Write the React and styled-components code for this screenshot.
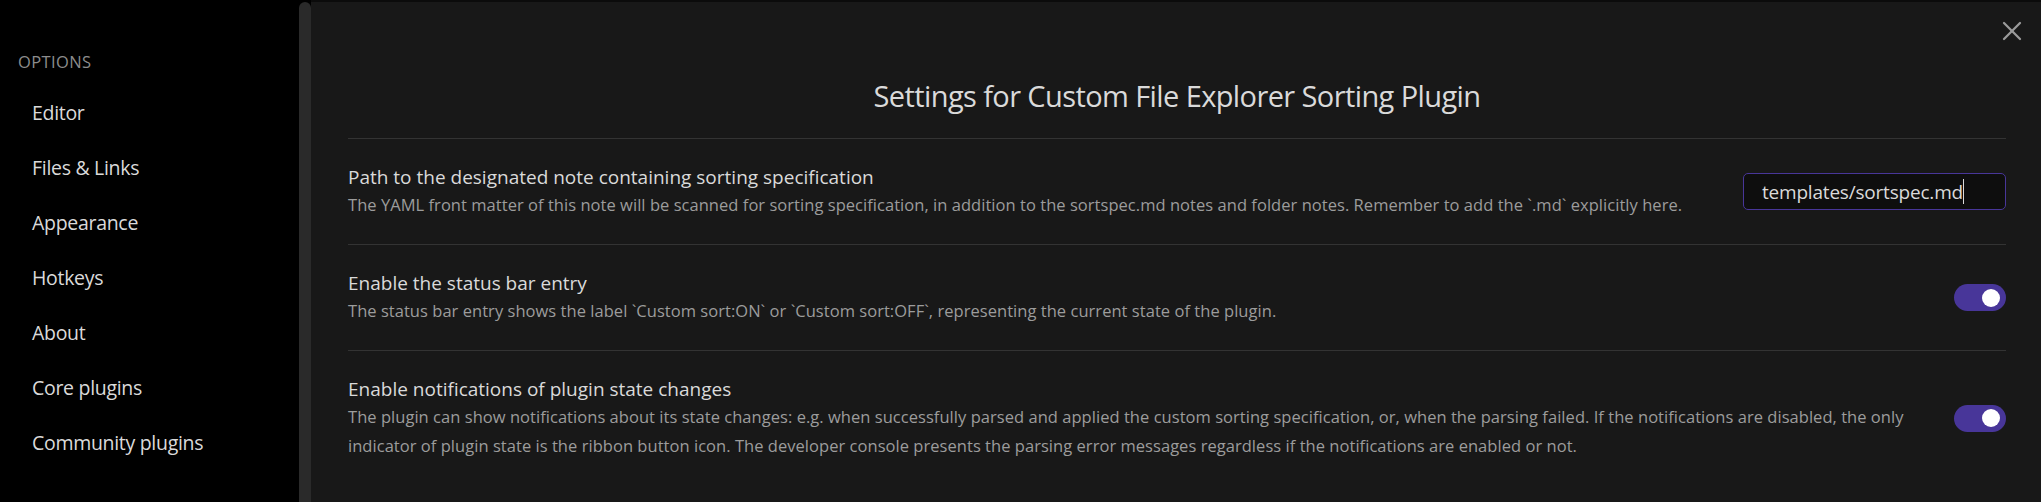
import React from 'react'
import styled, { createGlobalStyle } from 'styled-components'
import { X } from 'lucide-react'

const GlobalStyle = createGlobalStyle`
  html, body {
    margin: 0;
    padding: 0;
    background: #000;
    overflow: hidden;
  }
  * {
    box-sizing: border-box;
  }
`

const navItems = ['Editor', 'Files & Links', 'Appearance', 'Hotkeys', 'About', 'Core plugins', 'Community plugins']

const settings = [
  {
    name: 'Path to the designated note containing sorting specification',
    desc: ['The YAML front matter of this note will be scanned for sorting specification, in addition to the sortspec.md notes and folder notes. Remember to add the `.md` explicitly here.'],
    control: 'text',
    value: 'templates/sortspec.md'
  },
  {
    name: 'Enable the status bar entry',
    desc: ['The status bar entry shows the label `Custom sort:ON` or `Custom sort:OFF`, representing the current state of the plugin.'],
    control: 'toggle'
  },
  {
    name: 'Enable notifications of plugin state changes',
    desc: [
      'The plugin can show notifications about its state changes: e.g. when successfully parsed and applied the custom sorting specification, or, when the parsing failed. If the notifications are disabled, the only',
      'indicator of plugin state is the ribbon button icon. The developer console presents the parsing error messages regardless if the notifications are enabled or not.'
    ],
    control: 'toggle'
  }
]

export default function App() {
  return (
    <>
      <GlobalStyle />
      <Wrapper>
        <Sidebar>
          <NavHeader>OPTIONS</NavHeader>
          {navItems.map((item) => (
            <NavItem key={item}>{item}</NavItem>
          ))}
        </Sidebar>
        <ScrollTrack>
          <ScrollThumb />
        </ScrollTrack>
        <Main>
          <CloseButton>
            <X size={32} strokeWidth={1.7} />
          </CloseButton>
          <Title>Settings for Custom File Explorer Sorting Plugin</Title>
          {settings.map((s) => (
            <SettingRow key={s.name}>
              <Info>
                <Name>{s.name}</Name>
                <Desc>
                  {s.desc.map((line, i) => (
                    <React.Fragment key={i}>
                      {i > 0 && <br />}
                      {line}
                    </React.Fragment>
                  ))}
                </Desc>
              </Info>
              <Control>
                {s.control === 'text' ? (
                  <TextField>
                    {s.value}
                    <Caret />
                  </TextField>
                ) : (
                  <Toggle $on>
                    <Knob />
                  </Toggle>
                )}
              </Control>
            </SettingRow>
          ))}
        </Main>
      </Wrapper>
    </>
  )
}

const Wrapper = styled.div`
  display: flex;
  width: 2041px;
  height: 502px;
  overflow: hidden;
  font-family: "Open Sans", "Noto Sans", sans-serif;
  background: #000;
`

const Sidebar = styled.nav`
  width: 299px;
  flex: 0 0 299px;
  background: #000;
  padding-top: 52px;
`

const NavHeader = styled.div`
  padding-left: 18px;
  font-size: 16.5px;
  line-height: 20px;
  letter-spacing: 0.4px;
  color: #8c8c8c;
  margin-bottom: 13px;
`

const NavItem = styled.div`
  padding-left: 32px;
  font-size: 19.5px;
  line-height: 55px;
  letter-spacing: -0.3px;
  color: #dadada;
`

const ScrollTrack = styled.div`
  flex: 0 0 12px;
  background: #000;
  padding-top: 2px;
  display: flex;
`

const ScrollThumb = styled.div`
  flex: 1;
  background: #2a2a2a;
  border-radius: 6px 6px 0 0;
`

const Main = styled.main`
  position: relative;
  flex: 1;
  background: #181818;
  border-top: 2px solid #0b0b0b;
  padding: 0 35px 0 37px;
`

const CloseButton = styled.div`
  position: absolute;
  top: 13px;
  right: 13px;
  width: 32px;
  height: 32px;
  color: #9a9a9a;
  display: flex;
`

const Title = styled.h2`
  margin: 74px 0 22px;
  text-align: center;
  font-size: 29px;
  line-height: 40px;
  font-weight: 400;
  letter-spacing: -0.6px;
  color: #dadada;
`

const SettingRow = styled.div`
  display: flex;
  align-items: center;
  border-top: 1px solid #333;
  padding: 25px 0;
`

const Info = styled.div`
  flex: 1 1 auto;
  margin-right: 40px;
`

const Name = styled.div`
  font-size: 19px;
  line-height: 26px;
  letter-spacing: 0;
  color: #dadada;
`

const Desc = styled.div`
  font-size: 16.5px;
  line-height: 29px;
  letter-spacing: 0.04px;
  color: #9c9c9c;
`

const Control = styled.div`
  flex: 0 0 auto;
  display: flex;
  justify-content: flex-end;
`

const TextField = styled.div`
  width: 263px;
  height: 37px;
  display: flex;
  align-items: center;
  padding-left: 18px;
  background: #0e0e0e;
  border: 1px solid #483699;
  border-radius: 5px;
  font-size: 19px;
  letter-spacing: -0.2px;
  color: #dadada;
`

const Caret = styled.span`
  width: 1px;
  height: 25px;
  background: #dadada;
`

const Toggle = styled.div`
  width: 52px;
  height: 27px;
  border-radius: 14px;
  background: ${(p) => (p.$on ? '#483699' : '#3f3f3f')};
  display: flex;
  align-items: center;
  justify-content: ${(p) => (p.$on ? 'flex-end' : 'flex-start')};
  padding: 0 6px;
`

const Knob = styled.div`
  width: 18px;
  height: 18px;
  border-radius: 50%;
  background: #fff;
`
